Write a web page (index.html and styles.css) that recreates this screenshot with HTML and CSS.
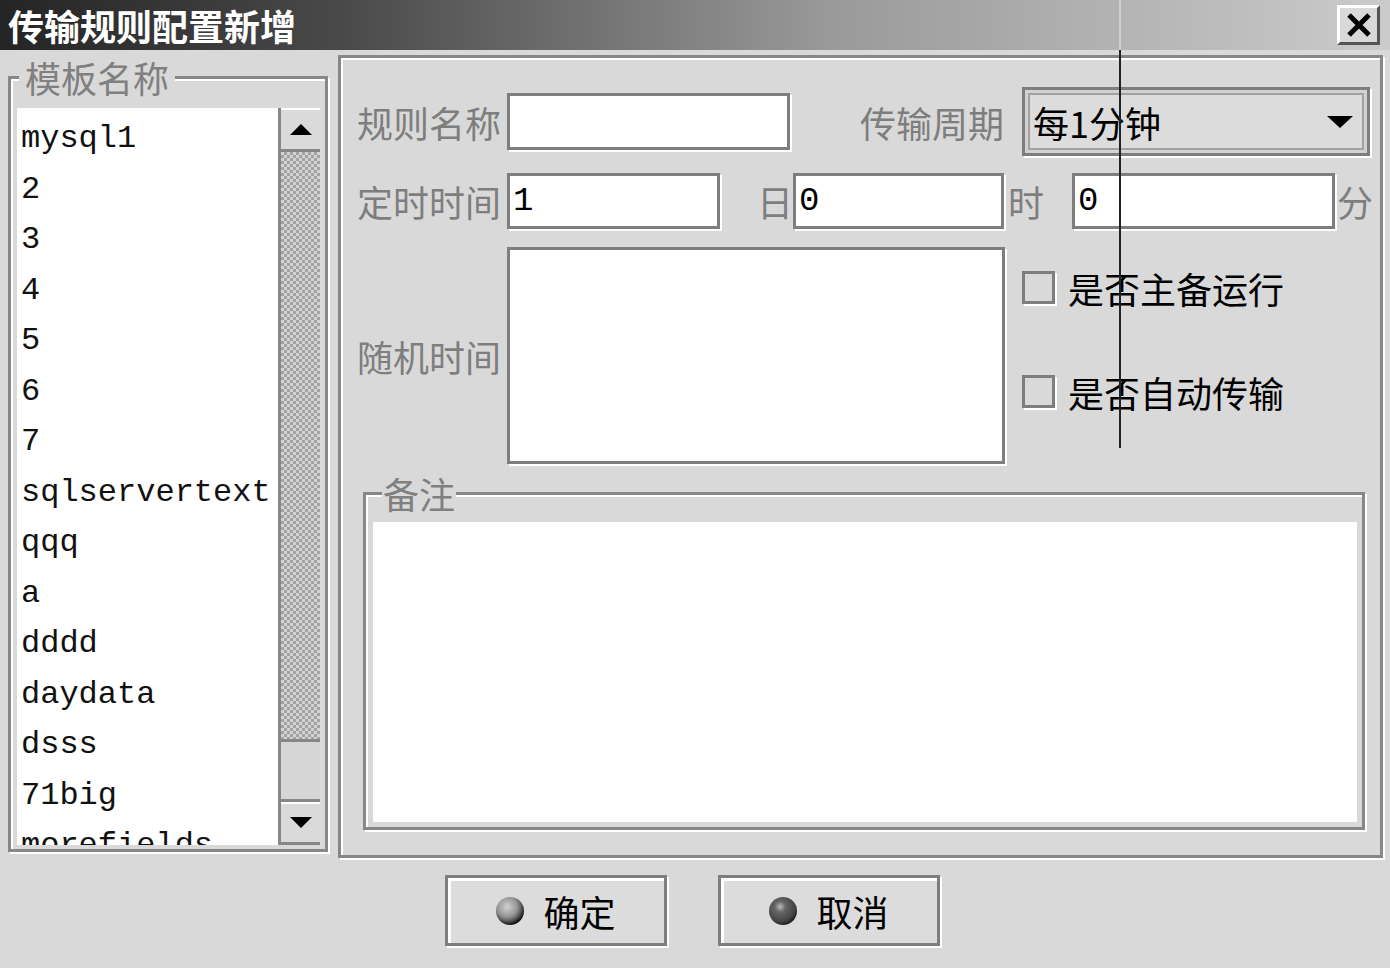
FILE: index.html
```html
<!DOCTYPE html>
<html lang="zh-CN">
<head>
    <meta charset="UTF-8">
    <title>传输规则配置新增</title>
    <link rel="stylesheet" href="styles.css">
</head>
<body>
    <div class="dialog">
        <div class="titlebar">
            <span class="title">传输规则配置新增</span>
            <button class="close-btn">
                <svg width="26" height="24" viewBox="0 0 26 24">
                    <path d="M3 2 L23 22 M23 2 L3 22" stroke="#000" stroke-width="5"/>
                </svg>
            </button>
        </div>

        <div class="main">
            <fieldset class="group template-group">
                <legend>模板名称</legend>
                <div class="listbox">
                    <ul class="list">
                        <li>mysql1</li>
                        <li>2</li>
                        <li>3</li>
                        <li>4</li>
                        <li>5</li>
                        <li>6</li>
                        <li>7</li>
                        <li>sqlservertext</li>
                        <li>qqq</li>
                        <li>a</li>
                        <li>dddd</li>
                        <li>daydata</li>
                        <li>dsss</li>
                        <li>71big</li>
                        <li>morefields</li>
                    </ul>
                    <div class="scrollbar">
                        <div class="scroll-btn up"><span class="arrow-up"></span></div>
                        <div class="scroll-thumb"></div>
                        <div class="scroll-track"></div>
                        <div class="scroll-btn down"><span class="arrow-down"></span></div>
                    </div>
                </div>
            </fieldset>

            <div class="panel">
                <div class="row row-name">
                    <span class="label">规则名称</span>
                    <div class="field w-name"></div>
                    <span class="label period">传输周期</span>
                    <div class="combo">
                        <div class="combo-inner">
                            <span>每1分钟</span>
                            <span class="arrow-down big"></span>
                        </div>
                    </div>
                </div>

                <div class="row row-time">
                    <span class="label">定时时间</span>
                    <div class="field w-day">1</div>
                    <span class="unit u-day">日</span>
                    <div class="field w-hour">0</div>
                    <span class="unit u-hour">时</span>
                    <div class="field w-min">0</div>
                    <span class="unit u-min">分</span>
                </div>

                <div class="row row-random">
                    <span class="label">随机时间</span>
                    <div class="field w-random"></div>
                    <div class="checks">
                        <label class="check"><span class="box"></span>是否主备运行</label>
                        <label class="check"><span class="box"></span>是否自动传输</label>
                    </div>
                </div>

                <fieldset class="group note-group">
                    <legend>备注</legend>
                    <div class="note-area"></div>
                </fieldset>
            </div>
        </div>

        <div class="buttons">
            <button class="btn">
                <svg width="30" height="30" viewBox="0 0 30 30">
                    <defs>
                        <radialGradient id="okBall" cx="40%" cy="35%" r="65%">
                            <stop offset="0" stop-color="#d0d0d0"/>
                            <stop offset="0.55" stop-color="#969696"/>
                            <stop offset="0.8" stop-color="#555"/>
                            <stop offset="1" stop-color="#111"/>
                        </radialGradient>
                    </defs>
                    <circle cx="15" cy="15" r="14" fill="url(#okBall)"/>
                </svg>
                确定
            </button>
            <button class="btn">
                <svg width="30" height="30" viewBox="0 0 30 30">
                    <defs>
                        <radialGradient id="cancelBall" cx="40%" cy="35%" r="65%">
                            <stop offset="0" stop-color="#bbb"/>
                            <stop offset="0.3" stop-color="#666"/>
                            <stop offset="0.8" stop-color="#444"/>
                            <stop offset="1" stop-color="#222"/>
                        </radialGradient>
                    </defs>
                    <circle cx="15" cy="15" r="14" fill="url(#cancelBall)"/>
                </svg>
                取消
            </button>
        </div>

        <div class="scanline"></div>
    </div>
</body>
</html>
```

FILE: styles.css
```css
* {
    box-sizing: border-box;
}

body {
    margin: 0;
    background: #d9d9d9;
    font-family: "Noto Sans CJK SC", "Liberation Sans", sans-serif;
}

.dialog {
    position: relative;
    width: 1390px;
    height: 968px;
    background: #d9d9d9;
    overflow: hidden;
}

/* title bar */
.titlebar {
    height: 50px;
    display: flex;
    align-items: center;
    justify-content: space-between;
    padding: 0 10px 0 8px;
    background: linear-gradient(to right, #242424, #4a4a4a 25%, #9a9a9a 60%, #cbcbcb);
}

.title {
    color: white;
    font-size: 36px;
    font-weight: bold;
    line-height: 40px;
}

.close-btn {
    width: 43px;
    height: 40px;
    padding: 0;
    display: flex;
    align-items: center;
    justify-content: center;
    background: #d9d9d9;
    border: 3px solid;
    border-color: #fff #555 #555 #fff;
}

/* main area */
.main {
    display: flex;
    align-items: flex-start;
    padding: 5px 0 0 8px;
}

.group {
    margin: 0;
    border: 3px solid #878787;
    box-shadow: inset 2px 2px 0 #fff, 2px 2px 0 #fff;
    min-width: 0;
}

.group legend {
    padding: 0 1px;
    font-size: 36px;
    line-height: 40px;
    color: #808080;
    background: #d9d9d9;
}

.template-group {
    width: 320px;
    margin-top: 2px;
    padding: 11px 5px 4px 6px;
}

.template-group legend {
    margin-left: 2px;
    padding: 0 6px 0 6px;
}

.listbox {
    display: flex;
    height: 737px;
}

.list {
    flex: 1;
    margin: 0;
    padding: 6px 0 0 4px;
    list-style: none;
    background: white;
    overflow: hidden;
    font-family: "Liberation Mono", monospace;
    font-size: 32px;
    line-height: 50.5px;
    color: #111;
}

.scrollbar {
    width: 42px;
    display: flex;
    flex-direction: column;
    border-left: 3px solid #878787;
    background: #d9d9d9;
}

.scroll-btn {
    display: flex;
    align-items: center;
    justify-content: center;
    background: #dadada;
}

.scroll-btn.up {
    height: 44px;
    border-top: 2px solid #fff;
    border-bottom: 3px solid #878787;
}

.scroll-btn.down {
    height: 46px;
    border-top: 3px solid #878787;
    border-bottom: 3px solid #878787;
    box-shadow: inset 0 2px 0 #fff;
}

.scroll-thumb {
    height: 590px;
    border-bottom: 3px solid #878787;
    background: repeating-conic-gradient(#a4a4a4 0 25%, #d2d2d2 0 50%) 0 0 / 6px 6px;
}

.scroll-track {
    flex: 1;
    background: #d6d6d6;
}

.arrow-up {
    width: 0;
    height: 0;
    border-left: 11px solid transparent;
    border-right: 11px solid transparent;
    border-bottom: 11px solid #000;
}

.arrow-down {
    width: 0;
    height: 0;
    border-left: 11px solid transparent;
    border-right: 11px solid transparent;
    border-top: 11px solid #000;
}

.arrow-down.big {
    border-left-width: 13px;
    border-right-width: 13px;
    border-top-width: 12px;
}

/* right panel */
.panel {
    width: 1045px;
    height: 803px;
    margin-left: 10px;
    padding: 29px 0 0 16px;
    border: 3px solid #878787;
    box-shadow: inset 2px 2px 0 #fff, 2px 2px 0 #fff;
}

.row {
    display: flex;
    align-items: center;
}

.row-name {
    height: 69px;
}

.row-time {
    height: 56px;
    margin-top: 17px;
}

.row-random {
    height: 217px;
    margin-top: 18px;
    align-items: stretch;
}

.label {
    width: 150px;
    flex: none;
    font-size: 36px;
    line-height: 40px;
    color: #7e7e7e;
    white-space: nowrap;
}

.row-random .label {
    align-self: center;
}

.label.period {
    width: auto;
    margin-left: 70px;
    margin-right: 18px;
}

.field {
    flex: none;
    display: flex;
    align-items: center;
    padding-left: 3px;
    background: white;
    border: 3px solid #7e7e7e;
    box-shadow: 2px 2px 0 #fff;
    font-family: "Liberation Mono", monospace;
    font-size: 34px;
    color: #000;
}

.w-name { width: 283px; height: 57px; }
.w-day { width: 213px; height: 56px; }
.w-hour { width: 211px; height: 56px; }
.w-min { width: 263px; height: 56px; margin-left: 28px; }
.w-random { width: 498px; height: 217px; }

.unit {
    font-size: 36px;
    line-height: 40px;
    color: #7e7e7e;
}

.u-day { margin-left: 37px; }
.u-hour { margin-left: 4px; }
.u-min { margin-left: 2px; }

.combo {
    width: 348px;
    height: 69px;
    padding: 3px;
    background: #d2d2d2;
    border: 3px solid #7e7e7e;
    box-shadow: 2px 2px 0 #fff;
}

.combo-inner {
    height: 100%;
    display: flex;
    align-items: center;
    justify-content: space-between;
    padding: 0 9px 0 3px;
    background: #dcdcdc;
    border: 2px solid #a2a2a2;
    font-size: 36px;
    color: #000;
}

.checks {
    display: flex;
    flex-direction: column;
    gap: 71px;
    margin-left: 17px;
    padding-top: 24px;
}

.check {
    display: flex;
    align-items: center;
    height: 33px;
    font-size: 36px;
    color: #000;
}

.box {
    width: 33px;
    height: 33px;
    margin-right: 13px;
    border: 3px solid #7e7e7e;
    box-shadow: 2px 2px 0 #fff;
    background: #d9d9d9;
}

.note-group {
    width: 1002px;
    margin: 9px 0 0 6px;
    padding: 9px 5px 5px 7px;
}

.note-group legend {
    margin-left: 9px;
}

.note-area {
    height: 300px;
    background: white;
}

/* buttons */
.buttons {
    display: flex;
    justify-content: center;
    gap: 51px;
    margin-top: 17px;
    padding-right: 6px;
}

.btn {
    width: 222px;
    height: 71px;
    display: flex;
    align-items: center;
    justify-content: center;
    gap: 18px;
    padding: 0;
    background: #dcdcdc;
    border: 3px solid #7e7e7e;
    box-shadow: inset 3px 3px 0 #fff, 2px 2px 0 #fff;
    font-family: "Noto Sans CJK SC", sans-serif;
    font-size: 36px;
    color: #000;
}

/* scanner artifact line */
.scanline {
    position: absolute;
    left: 1119px;
    top: 0;
    width: 2px;
    height: 448px;
    background: linear-gradient(#cfcfcf 0 50px, #222 50px);
}
```
